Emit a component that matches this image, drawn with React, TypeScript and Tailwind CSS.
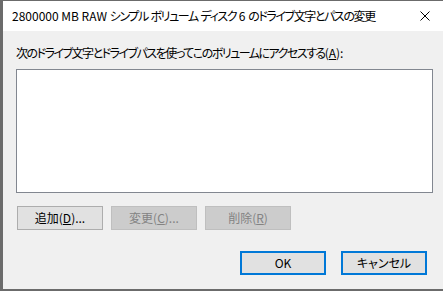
const font = "font-['Yu_Gothic_UI','Noto_Sans_CJK_JP',sans-serif] [font-feature-settings:'palt']";

function Btn({ children, disabled, primary }: { children: React.ReactNode; disabled?: boolean; primary?: boolean }) {
  const cls = primary
    ? "border-2 border-[#0078d7] bg-[#e1e1e1] text-black"
    : disabled
    ? "border border-[#bfbfbf] bg-[#cccccc] text-[#838383]"
    : "border border-[#adadad] bg-[#e1e1e1] text-black";
  return (
    <div className={`w-[86px] h-[24px] flex items-center justify-center text-[12px] leading-none ${cls}`}>
      {children}
    </div>
  );
}

export default function App() {
  return (
    <div className={`w-[443px] h-[291px] bg-[#6b6b6b] pl-[3px] pt-[1px] pb-[2px] flex ${font}`}>
      <div className="flex-1 flex flex-col bg-[#f0f0f0]">
        {/* title bar */}
        <div className="h-[30px] bg-white flex items-center pl-[9px] pr-[8px]">
          <span className="text-[12px] text-black flex-1 whitespace-pre">
            2800000 MB RAW <span className="tracking-[-1.4px]">シンプル</span> <span className="tracking-[-1.4px]">ボリューム</span>{" "}
            <span className="tracking-[-1.4px]">ディスク</span> 6 <span className="tracking-[-1.4px]">のドライブ文字とパスの変更</span>
          </span>
          <svg width="10" height="10" viewBox="0 0 10 10" className="mr-[5px]">
            <path d="M0.5 0.5 L9.5 9.5 M9.5 0.5 L0.5 9.5" stroke="#000" strokeWidth="1" />
          </svg>
        </div>

        {/* body */}
        <div className="flex-1 flex flex-col pl-[13px] pr-[10px]">
          <div className="mt-[14px] h-[16px] flex items-center text-[12px] text-black whitespace-pre">
            <span className="tracking-[-1.5px]">次のドライブ文字とドライブ</span>{"  "}<span className="tracking-[-1.5px]">パスを使ってこのボリュームにアクセスする</span>(<span className="underline">A</span>):
          </div>
          <div className="mt-[8px] h-[124px] border border-[#828790] bg-white" />
          <div className="mt-[13px] ml-[1px] flex gap-[8px]">
            <Btn>
              追加(<span className="underline">D</span>)...
            </Btn>
            <Btn disabled>
              変更(<span className="underline">C</span>)...
            </Btn>
            <Btn disabled>
              削除(<span className="underline">R</span>)
            </Btn>
          </div>
          <div className="mt-[21px] flex justify-end gap-[15px] pr-[6px]">
            <Btn primary>OK</Btn>
            <Btn primary>キャンセル</Btn>
          </div>
        </div>
      </div>
    </div>
  );
}
